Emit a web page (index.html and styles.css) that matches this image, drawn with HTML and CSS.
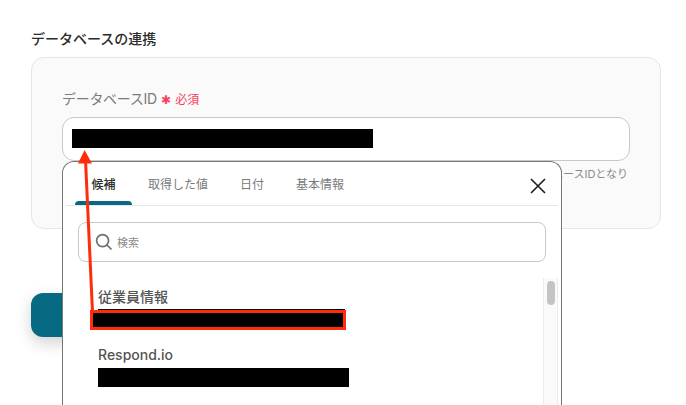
FILE: index.html
```html
<!DOCTYPE html>
<html lang="ja">
<head>
  <meta charset="UTF-8" />
  <meta name="viewport" content="width=device-width, initial-scale=1.0" />
  <title>データベースの連携</title>
  <link rel="stylesheet" href="styles.css">
</head>
<body>
  <main class="page">
    <h2 class="section-title">データベースの連携</h2>

    <section class="card">
      <div class="field-label">
        <span>データベースID</span>
        <span class="required"><span class="star">✱</span> 必須</span>
      </div>

      <div class="field">
        <div class="input">
          <div class="redact redact-input"></div>
        </div>
        <p class="hint">データベースIDとなり</p>

        <!-- 候補ポップアップ -->
        <div class="popup">
          <div class="tabs">
            <button class="tab tab-active">候補</button>
            <button class="tab">取得した値</button>
            <button class="tab">日付</button>
            <button class="tab">基本情報</button>
            <svg class="close" viewBox="0 0 16 16" width="16" height="16">
              <path d="M1 1 L15 15 M15 1 L1 15" />
            </svg>
          </div>

          <div class="search">
            <svg class="search-icon" viewBox="0 0 18 18" width="18" height="18">
              <circle cx="7.6" cy="7.6" r="6" />
              <path d="M12 12 L16.5 16.5" />
            </svg>
            <span>検索</span>
          </div>

          <div class="list">
            <div class="options">
              <div class="option">
                <div class="option-name">従業員情報</div>
                <div class="redact redact-first"></div>
              </div>
              <div class="option">
                <div class="option-name">Respond.io</div>
                <div class="redact redact-second"></div>
              </div>
            </div>
            <div class="scrollbar"><div class="thumb"></div></div>
          </div>
        </div>
      </div>
    </section>

    <div class="submit"></div>
  </main>

  <!-- 注釈 -->
  <div class="mark-box"></div>
  <svg class="mark-arrow" viewBox="0 0 686 405" width="686" height="405">
    <path class="arrow-line" d="M92.5 312 L85.5 160" />
    <path class="arrow-head" d="M84.6 150 L78 163.5 L92 163.5 Z" />
  </svg>
</body>
</html>
```

FILE: styles.css
```css
html, body {
  height: 405px;
  margin: 0;
  overflow: hidden;
  background: #fff;
  font-family: Inter, "Noto Sans CJK JP", sans-serif;
}

.page {
  padding: 29px 25px 0 31px;
}

.section-title {
  margin: 0 0 9px;
  font-size: 14px;
  line-height: 19px;
  font-weight: 500;
  color: #2b2b2b;
}

.card {
  box-sizing: border-box;
  height: 172px;
  padding: 30px 30px 0 30px;
  background: #fafafa;
  border: 1px solid #e3e5e8;
  border-radius: 13px;
}

.field-label {
  display: flex;
  align-items: center;
  gap: 4px;
  height: 20px;
  margin-bottom: 9px;
  font-size: 14px;
  letter-spacing: -0.3px;
  color: #7b7b7b;
}

.required {
  font-size: 12px;
  letter-spacing: 0;
  color: #f5415b;
}

.star {
  font-size: 12px;
  margin-right: 1px;
}

.field {
  position: relative;
}

.input {
  box-sizing: border-box;
  height: 44px;
  padding: 11px 9px;
  background: #fff;
  border: 1px solid #c8c8c8;
  border-radius: 12px;
}

.redact {
  background: #000;
}

.redact-input {
  width: 301px;
  height: 19px;
}

.hint {
  margin: 5px 2px 0 0;
  font-size: 11px;
  line-height: 16px;
  color: #8a8a8a;
  text-align: right;
}

.popup {
  position: absolute;
  top: 44px;
  left: 0;
  box-sizing: border-box;
  width: 500px;
  height: 244px;
  padding: 0 3px;
  background: #fff;
  border: 1px solid #777;
  border-bottom: none;
  border-radius: 12px 12px 0 0;
}

.tabs {
  position: relative;
  display: flex;
  align-items: flex-start;
  height: 43px;
  padding-left: 9px;
  border-bottom: 1px solid #e4e6e9;
}

.tab {
  position: relative;
  height: 43px;
  padding: 2px 16px 0;
  border: none;
  background: none;
  font-family: inherit;
  font-size: 12px;
  line-height: 17px;
  color: #7a7a7a;
}

.tab-active {
  width: 57px;
  color: #2b2b2b;
  font-weight: 500;
}

.tab-active::after {
  content: "";
  position: absolute;
  left: 0;
  right: 0;
  bottom: 0;
  height: 4px;
  background: #076a82;
  border-radius: 4px 4px 0 0;
}

.close {
  position: absolute;
  top: 16px;
  right: 12px;
  fill: none;
  stroke: #1c1c1c;
  stroke-width: 1.6;
}

.search {
  box-sizing: border-box;
  display: flex;
  align-items: center;
  gap: 4px;
  width: 468px;
  height: 40px;
  margin: 16px 0 16px 12px;
  padding-left: 16px;
  border: 1px solid #c8c8c8;
  border-radius: 8px;
  font-size: 11px;
  color: #8a8a8a;
}

.search-icon {
  fill: none;
  stroke: #6f6f6f;
  stroke-width: 1.7;
}

.list {
  display: flex;
  justify-content: space-between;
  height: 127px;
}

.options {
  padding: 9px 0 0 32px;
}

.option {
  margin-bottom: 17px;
}

.option:last-child {
  margin-bottom: 0;
}

.option-name {
  font-size: 14px;
  line-height: 20px;
  font-weight: 500;
  color: #555;
}

.redact-first {
  width: 247px;
  height: 19px;
  margin-top: 2px;
}

.redact-second {
  width: 251px;
  height: 19px;
  margin-top: 3px;
}

.scrollbar {
  box-sizing: border-box;
  width: 15px;
  padding: 3px 3px 0 3px;
  background: #fafafa;
  border-left: 1px solid #ececec;
  border-right: 1px solid #ececec;
}

.thumb {
  width: 8px;
  height: 24px;
  background: #c4c4c4;
  border-radius: 4px;
}

.submit {
  width: 200px;
  height: 44px;
  margin-top: 64px;
  background: #076a82;
  border-radius: 12px;
  box-shadow: 0 6px 16px rgba(0, 0, 0, 0.18);
}

/* annotation over the screenshot */
.mark-box {
  position: absolute;
  top: 310px;
  left: 90px;
  width: 250px;
  height: 14px;
  background: #000;
  border: 3px solid #ff2d0a;
}

.mark-arrow {
  position: absolute;
  top: 0;
  left: 0;
}

.arrow-line {
  fill: none;
  stroke: #ff2d0a;
  stroke-width: 3;
}

.arrow-head {
  fill: #ff2d0a;
}
```
